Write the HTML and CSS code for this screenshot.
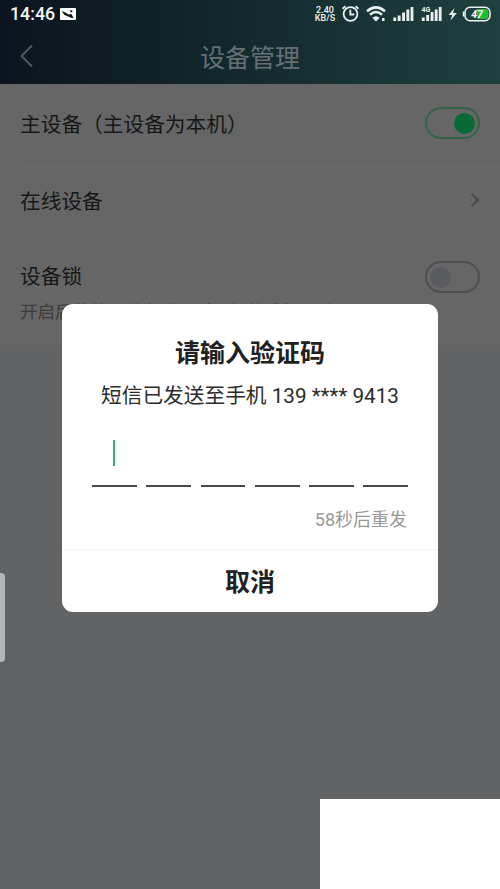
FILE: index.html
```html
<!DOCTYPE html>
<html lang="zh-CN">
<head>
<meta charset="utf-8">
<title>设备管理</title>
<link rel="stylesheet" href="styles.css">
</head>
<body>
<div class="phone">
  <header class="header">
    <div class="status">
      <span class="time">14:46</span>
      <svg class="picture" width="16" height="12" viewBox="0 0 16 12"><path fill="#fff" fill-rule="evenodd" d="M1 0h14q1 0 1 1v10q0 1-1 1H1q-1 0-1-1V1q0-1 1-1ZM1.500 3L5.500 4.500L8.500 6.500L11.500 6L13.500 10H11.500L8 8.500L4.500 7ZM10.300 2.200h2v2h-2Z"/></svg>
      <span class="spacer"></span>
      <span class="speed"><b>2.40</b><b>KB/S</b></span>
      <svg class="indicators" width="160" height="24" viewBox="340 2 160 24">
        <g fill="none" stroke="#e9efef" stroke-width="1.800">
          <circle cx="350.500" cy="14" r="6.900"/><path d="M350.300 9.800v4.700h4M342.500 8.800l3-2.500M358.500 8.800l-3-2.500"/>
          <path d="M367 11.200Q376 3.500 385 11.200M370 14.700Q376 9.300 382 14.700" stroke-width="2.500"/>
        </g>
        <g fill="#e9efef">
          <path d="M372.300 17.800Q376 14.500 379.700 17.800L376 21.500ZM382 18h2.500v3H382Z"/>
          <path d="M393.300 17.500h2.900V21h-2.900zM397.700 15.500h2.900V21h-2.900zM402.100 12.500h2.900V21h-2.900zM406.400 9.500h2.900V21h-2.900zM410.600 7h2.800v14h-2.800z"/>
          <path d="M421.800 17.500h2.900V21h-2.900zM426.200 15h2.900v6h-2.900zM430.600 12h2.900v9h-2.900zM434.700 9.500h2.900V21h-2.900zM438.800 7h2.800v14h-2.800z"/>
          <path d="M454.500 8l-6 7h3.700l-1.700 5.500 6.300-7.500h-3.800Z"/>
          <text x="421.500" y="11.800" class="net">4G</text>
        </g>
        <rect x="465" y="7.300" width="25" height="13.400" rx="5" fill="none" stroke="#e9efef" stroke-width="1.600"/>
        <path d="M463.500 11.500v5" stroke="#e9efef" stroke-width="1.500"/>
        <path d="M477 9h8.500q3 0 3 3v4q0 3-3 3H477Z" fill="#23bd32"/>
        <text x="477" y="17.800" class="battery" text-anchor="middle">47</text>
      </svg>
    </div>
    <div class="nav">
      <svg width="14" height="24" viewBox="0 0 14 24"><path d="M12 1.500L1.500 12l10.500 10.500" fill="none" stroke="#525a5f" stroke-width="2"/></svg>
      <h1>设备管理</h1>
    </div>
  </header>
  <main class="list">
    <div class="row"><span>主设备（主设备为本机）</span><i class="switch on"></i></div>
    <div class="row"><span>在线设备</span><svg class="arrow" width="10" height="16" viewBox="0 0 10 16"><path d="M1.500 2L8 8l-6.500 6" fill="none" stroke="#4a4a4b" stroke-width="2"/></svg></div>
    <div class="row lock"><span>设备锁</span><i class="switch"></i><p>开启后此外新设备登录时需短信或扫码验证</p></div>
  </main>
  <section class="dialog">
    <h2>请输入验证码</h2>
    <p class="sent">短信已发送至手机 139 **** 9413</p>
    <div class="code"><span><i class="caret"></i></span><span></span><span></span><span></span><span></span><span></span></div>
    <p class="resend">58秒后重发</p>
    <button type="button">取消</button>
  </section>
  <div class="handle"></div>
  <div class="patch"></div>
</div>
</body>
</html>
```
FILE: styles.css
```css
* { box-sizing: border-box; }
body {
  margin: 0;
  font-family: Roboto, "Noto Sans CJK SC", sans-serif;
  color: #171717;
}
h1, h2, p { margin: 0; font-weight: 400; }
.phone {
  position: relative;
  width: 500px;
  height: 889px;
  overflow: hidden;
  background: #626365;
}
.header {
  height: 84px;
  background: linear-gradient(90deg, #0b141e 0%, #102228 32%, #162f32 62%, #1f403f 100%);
}
.status {
  display: flex;
  align-items: center;
  height: 28px;
  padding-left: 10px;
  color: #f2f5f5;
}
.time { width: 50px; font-size: 17.800px; font-weight: 500; line-height: 28px; white-space: nowrap; }
.spacer { flex: 1; }
.speed { width: 24px; margin-right: 3px; font-size: 9px; line-height: 8.500px; text-align: center; }
.speed b { display: block; font-weight: 500; }
.net { font-size: 7px; font-weight: 700; }
.battery { font-size: 10.500px; font-weight: 700; font-style: italic; fill: #fff; }
.nav {
  display: grid;
  grid-template-columns: 14px 1fr 14px;
  align-items: center;
  height: 56px;
  padding: 0 20px;
}
.nav h1 { padding-top: 5px; font-size: 25px; line-height: 51px; text-align: center; color: #667073; }
.list { height: 261px; background: #666; }
.row {
  display: flex;
  align-items: center;
  justify-content: space-between;
  height: 77px;
  margin-left: 20px;
  padding-right: 20px;
  border-bottom: 1px solid #626262;
  font-size: 20.700px;
}
.row > span { padding-top: 1px; }
.arrow { margin-top: 2px; }
.switch {
  width: 55px;
  height: 32px;
  margin-top: 2px;
  padding: 4px;
  border: 2px solid #4d4e50;
  border-radius: 16px;
}
.switch::before {
  content: "";
  display: block;
  width: 21px;
  height: 21px;
  margin-left: -1px;
  border-radius: 50%;
  background: #5a5c60;
}
.switch.on { border-color: #30654a; }
.switch.on::before { margin-left: 23px; background: #086b35; }
.row.lock {
  display: grid;
  grid-template-columns: 1fr 55px;
  grid-template-rows: 41px 28px;
  align-content: start;
  height: 107px;
  padding-top: 19px;
  border: 0;
}
.row.lock > span { padding: 0; line-height: 34px; margin-top: -2px; }
.lock .switch { align-self: start; margin-top: 4px; }
.lock p { font-size: 17.500px; line-height: 28px; color: #3c3c3c; white-space: nowrap; }
.dialog {
  position: absolute;
  left: 62px;
  top: 304px;
  width: 376px;
  height: 308px;
  border-radius: 11px;
  background: #fff;
  overflow: hidden;
  text-align: center;
}
.dialog h2 { padding-top: 32px; font-size: 25px; font-weight: 700; line-height: 36px; color: #212121; }
.sent { padding-top: 9px; font-size: 20.700px; line-height: 30px; color: #2b2b2b; white-space: nowrap; }
.code {
  display: grid;
  grid-template-columns: repeat(6, 1fr);
  gap: 9.500px;
  height: 55px;
  margin: 21px 30px 0;
}
.code span { display: flex; justify-content: center; padding-top: 8px; height: 55px; border-bottom: 2px solid #49494b; }
.caret { width: 2px; height: 26px; background: #39ae65; }
.resend { height: 62px; padding: 18px 31px 0; font-size: 18px; line-height: 30px; text-align: right; color: #999; }
.dialog button {
  display: block;
  width: 100%;
  height: 63px;
  padding: 3px 0 0;
  border: 0;
  border-top: 1px solid #f1f1f1;
  background: none;
  font: 700 25px/59px Roboto, "Noto Sans CJK SC", sans-serif;
  color: #212121;
}
.handle {
  position: absolute;
  left: 0;
  top: 573px;
  width: 5px;
  height: 89px;
  border-radius: 0 4px 4px 0;
  background: #b5b6b8;
}
.patch {
  position: absolute;
  right: 0;
  bottom: 0;
  width: 180px;
  height: 90px;
  background: #fff;
}
```
